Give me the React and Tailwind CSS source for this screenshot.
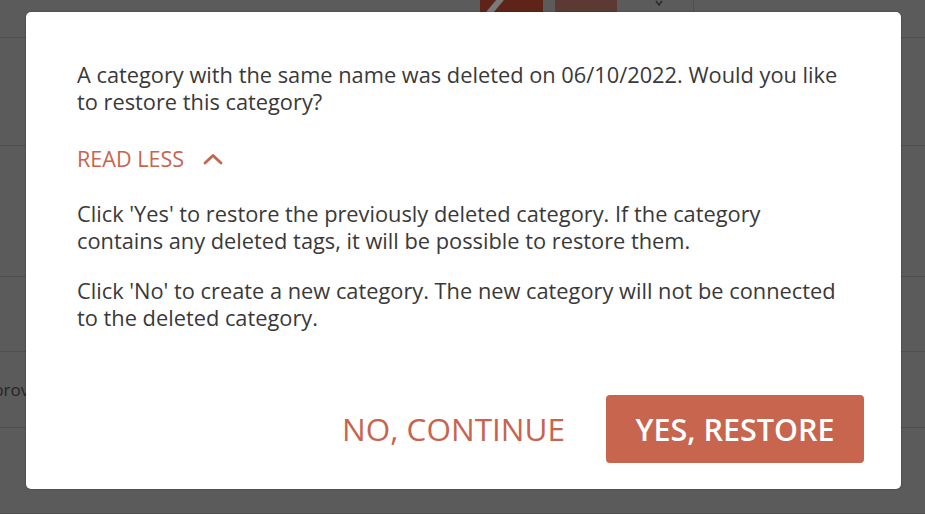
import React from 'react';

const ChevronUp = () => (
  <svg width="20" height="12" viewBox="0 0 20 12" fill="none" className="ml-[19px]">
    <path d="M2 10 L10 2.5 L18 10" stroke="#c8644e" strokeWidth="2.8" strokeLinecap="round" strokeLinejoin="round" />
  </svg>
);

const BackgroundPage = () => {
  const rows = [
    { h: 'h-[38px]', text: '' },
    { h: 'h-[108px]', text: '' },
    { h: 'h-[131px]', text: '' },
    { h: 'h-[75px]', text: '' },
    { h: 'h-[76px]', text: 'Approve' },
    { h: 'h-[86px]', text: '' },
  ];

  return (
    <div className="w-[925px] h-[514px] bg-[#5b5b5b] overflow-hidden">
      <div className="relative">
        {rows.map((row, index) => (
          <div key={index} className={`${row.h} border-b border-[#4f4f4f] flex items-center`}>
            {row.text && (
              <span className="ml-[-28px] text-[17px] text-[#262626]">{row.text}</span>
            )}
          </div>
        ))}
        <div className="absolute top-0 left-[480px] flex h-[12px]">
          <div className="w-[63px] h-full bg-[#5e2419] relative overflow-hidden">
            <div className="absolute left-[12px] top-[-4px] w-[6px] h-[20px] bg-[#7a7a7a] rotate-[40deg]" />
          </div>
          <div className="w-[62px] h-full ml-[12px] bg-[#5c3a33]" />
          <div className="w-[22px] h-full ml-[31px] flex justify-center">
            <svg width="10" height="8" viewBox="0 0 10 8">
              <path d="M2 1 L5 5 L8 1" stroke="#2a2a2a" strokeWidth="1.6" fill="none" />
            </svg>
          </div>
          <div className="w-px h-full ml-[23px] bg-[#4f4f4f]" />
        </div>
      </div>
    </div>
  );
};

export default function App() {
  return (
    <div className="relative w-[925px] h-[514px] font-['Open_Sans',sans-serif]">
      <BackgroundPage />
      <div className="absolute left-[26px] top-[12px] w-[875px] h-[477px] bg-white rounded-[5px] shadow-[0_0_2px_rgba(0,0,0,0.35)] flex flex-col pl-[51px] pr-[37px] pt-[50px] pb-[26px]">
        <p className="text-[21.8px] leading-[26.5px] text-[#393939]">
          A category with the same name was deleted on 06/10/2022. Would you like
          <br />
          to restore this category?
        </p>

        <button className="mt-[31px] h-[26px] flex items-center self-start text-[21.6px] leading-[26px] text-[#c8644e]">
          READ LESS
          <ChevronUp />
        </button>

        <div className="mt-[29px] text-[21.8px] leading-[26.5px] text-[#393939]">
          <p>
            Click 'Yes' to restore the previously deleted category. If the category
            <br />
            contains any deleted tags, it will be possible to restore them.
          </p>
          <p className="mt-[24px]">
            Click 'No' to create a new category. The new category will not be connected
            <br />
            to the deleted category.
          </p>
        </div>

        <div className="mt-auto flex items-center justify-end gap-[41px]">
          <button className="text-[31.5px] leading-[40px] text-[#c8644e]">NO, CONTINUE</button>
          <button className="w-[258px] h-[68px] rounded-[4px] bg-[#c7654f] text-white text-[30.5px] leading-[40px] font-semibold">
            YES, RESTORE
          </button>
        </div>
      </div>
    </div>
  );
}
